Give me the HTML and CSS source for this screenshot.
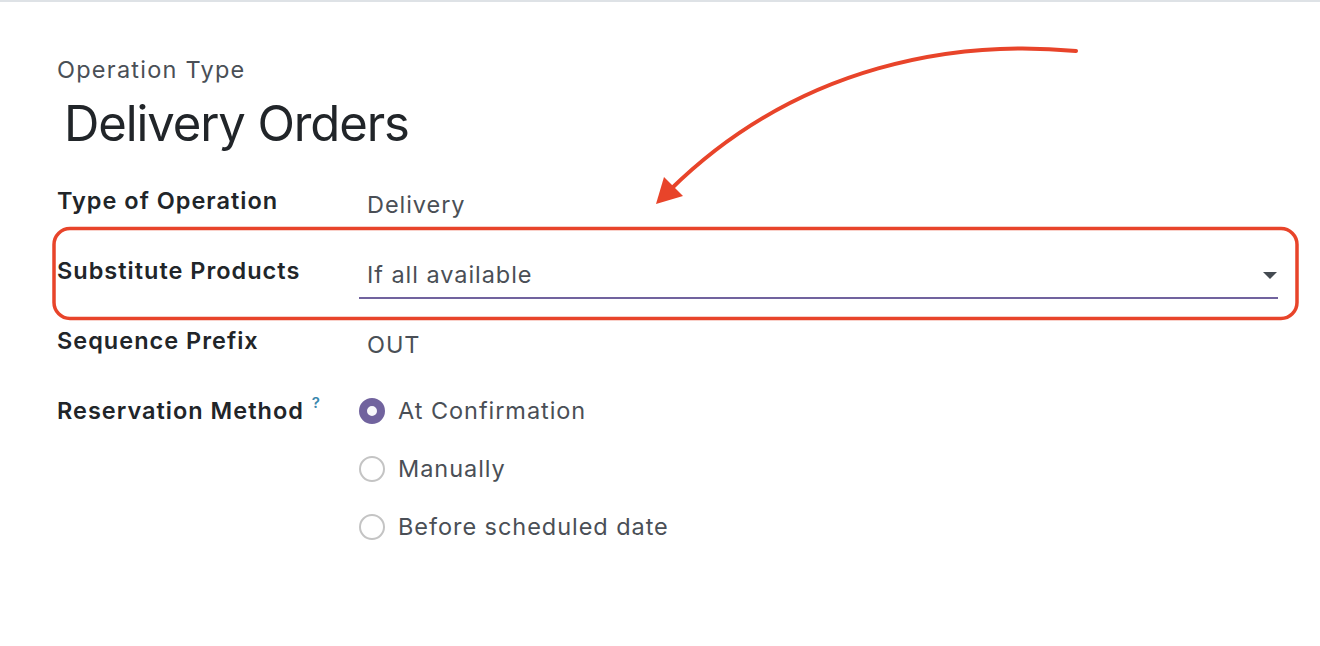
FILE: index.html
```html
<!DOCTYPE html>
<html>
<head>
<meta charset="utf-8">
<link rel="stylesheet" href="styles.css">
</head>
<body>
<div class="topline"></div>
<div class="sheet">
  <div class="subtitle">Operation Type</div>
  <div class="title">Delivery Orders</div>
  <div class="fields">
    <div class="row">
      <div class="label">Type of Operation</div>
      <div class="value"><span class="text">Delivery</span></div>
    </div>
    <div class="row">
      <div class="label">Substitute Products</div>
      <div class="value">
        <div class="select">
          <span class="text">If all available</span>
          <span class="caret"></span>
        </div>
      </div>
    </div>
    <div class="row">
      <div class="label">Sequence Prefix</div>
      <div class="value"><span class="text">OUT</span></div>
    </div>
    <div class="row row-radio">
      <div class="label">Reservation Method<sup class="help">?</sup></div>
      <div class="value radios">
        <div class="radio"><span class="dot checked"></span><span>At Confirmation</span></div>
        <div class="radio"><span class="dot"></span><span>Manually</span></div>
        <div class="radio"><span class="dot"></span><span>Before scheduled date</span></div>
      </div>
    </div>
  </div>
</div>
<svg class="annot" width="1320" height="646" viewBox="0 0 1320 646">
  <rect x="54" y="228.5" width="1243" height="90" rx="16" ry="16" fill="none" stroke="#e8442a" stroke-width="3.5"/>
  <path d="M1076,51 C960,40 800,62 670,190" fill="none" stroke="#e8442a" stroke-width="4" stroke-linecap="round"/>
  <polygon points="656,204 664,177 683,196" fill="#e8442a"/>
</svg>
</body>
</html>
```

FILE: styles.css
```css
html, body {
  margin: 0;
  padding: 0;
  background: #ffffff;
}
body {
  width: 1320px;
  height: 646px;
  overflow: hidden;
  position: relative;
  font-family: Inter, "Noto Sans", "Liberation Sans", sans-serif;
  color: #212529;
}
.topline {
  height: 2px;
  background: #dee2e6;
}
.sheet {
  padding: 52px 0 0 57px;
}
.subtitle {
  font-size: 23.5px;
  line-height: 32px;
  color: #4a4f56;
  letter-spacing: 1.25px;
}
.title {
  font-size: 49px;
  line-height: 60px;
  margin-left: 7px;
  margin-top: 8px;
  color: #212529;
  letter-spacing: -1.1px;
}
.fields {
  margin-top: 31px;
  display: flex;
  flex-direction: column;
}
.row {
  display: flex;
  height: 70px;
}
.label {
  width: 302px;
  flex: none;
  font-size: 23.5px;
  font-weight: 580;
  line-height: 32px;
  padding-top: 0;
  color: #212529;
  letter-spacing: 1px;
}
.value {
  flex: 1;
  font-size: 23.5px;
  line-height: 32px;
  color: #4a4f56;
  padding-top: 4px;
  letter-spacing: 0.95px;
}
.value .text {
  padding-left: 8px;
}
.select {
  width: 919px;
  height: 40px;
  border-bottom: 2px solid #71639e;
  display: flex;
  align-items: flex-start;
  justify-content: space-between;
  box-sizing: border-box;
}
.caret {
  width: 0;
  height: 0;
  border-left: 7px solid transparent;
  border-right: 7px solid transparent;
  border-top: 7px solid #444a51;
  margin-top: 13px;
  margin-right: 1px;
}
.help {
  font-size: 15px;
  color: #3a87ad;
  font-weight: 600;
  margin-left: 8px;
  vertical-align: top;
  position: relative;
  top: -8px;
  letter-spacing: 0;
}
.row-radio {
  height: auto;
}
.radios {
  display: flex;
  flex-direction: column;
  gap: 26px;
  padding-top: 0;
}
.radio {
  display: flex;
  align-items: center;
  gap: 13px;
  height: 32px;
}
.dot {
  width: 26px;
  height: 26px;
  border-radius: 50%;
  border: 2px solid #c4c4c4;
  box-sizing: border-box;
  background: #fff;
  flex: none;
}
.dot.checked {
  border: 8px solid #71639e;
  background: #f8f8fb;
}
.annot {
  position: absolute;
  left: 0;
  top: 0;
  pointer-events: none;
}
```
